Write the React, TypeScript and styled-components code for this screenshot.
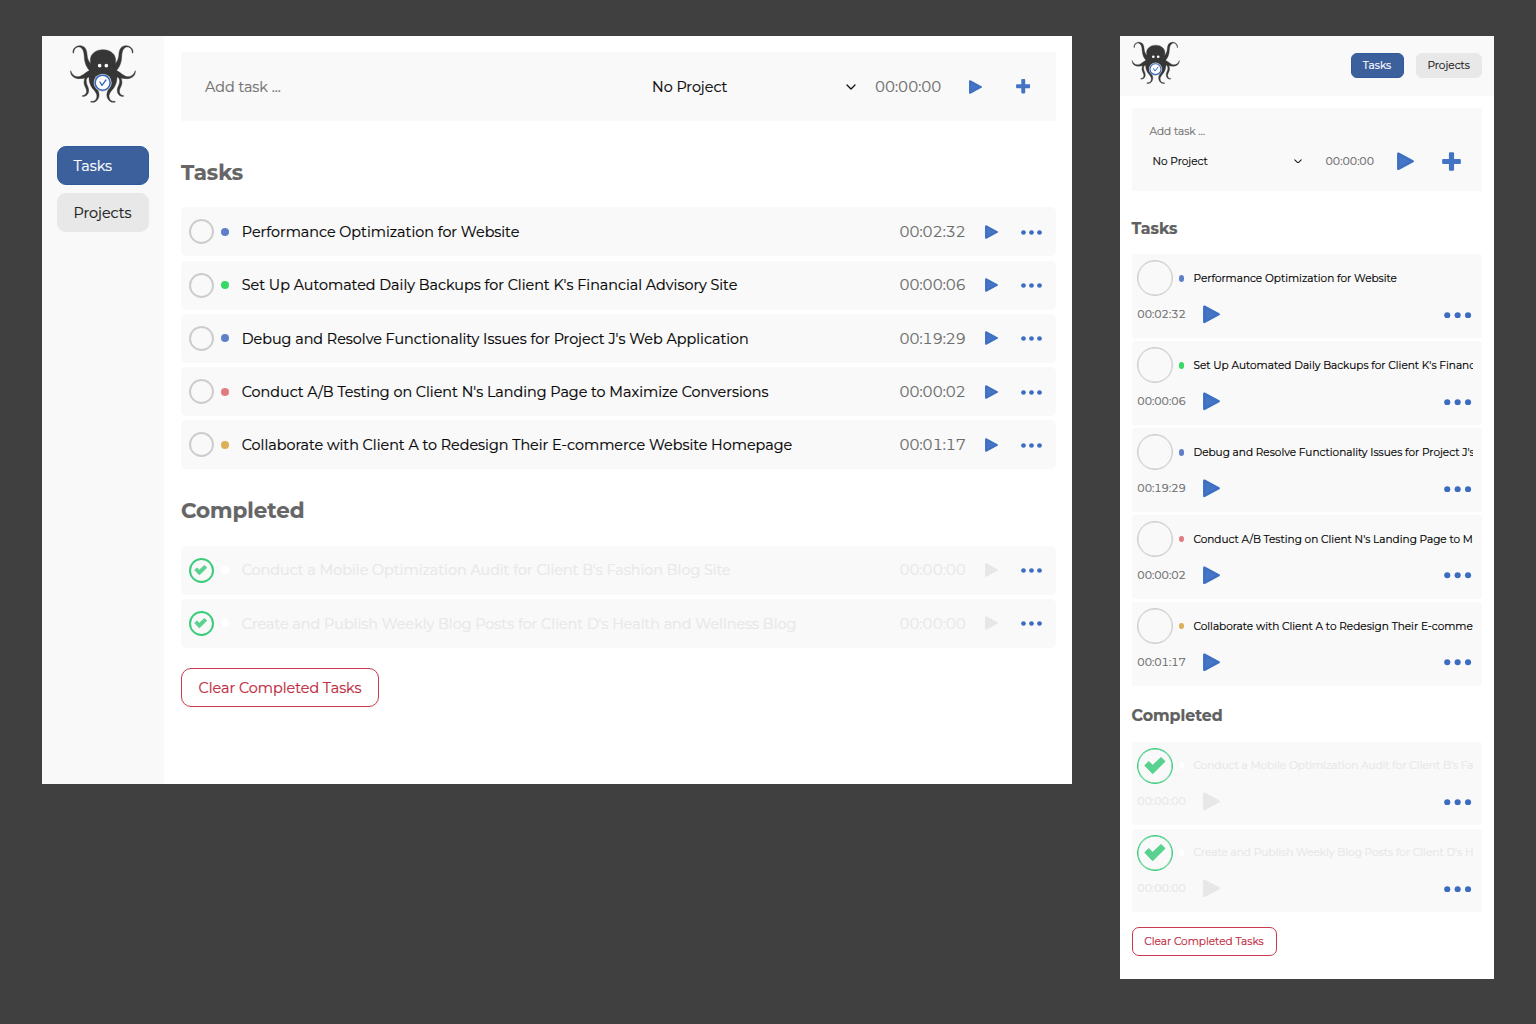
import React from "react";
import styled, { createGlobalStyle, css } from "styled-components";

const GlobalStyle = createGlobalStyle`
  *, *::before, *::after { box-sizing: border-box; }
  body {
    margin: 0;
    background: #404040;
    font-family: Montserrat, Inter, "Open Sans", sans-serif;
    color: #0b0b0b;
    -webkit-text-stroke: 0.2px currentColor;
  }
  button { font: inherit; background: none; border: 0; padding: 0; }
`;

/* ---------- data ---------- */

interface Task {
  title: string;
  time: string;
  color: string;
}

const openTasks: Task[] = [
  { title: "Performance Optimization for Website", time: "00:02:32", color: "#5f7fc9" },
  { title: "Set Up Automated Daily Backups for Client K's Financial Advisory Site", time: "00:00:06", color: "#35d865" },
  { title: "Debug and Resolve Functionality Issues for Project J's Web Application", time: "00:19:29", color: "#5f7fc9" },
  { title: "Conduct A/B Testing on Client N's Landing Page to Maximize Conversions", time: "00:00:02", color: "#e27c7c" },
  { title: "Collaborate with Client A to Redesign Their E-commerce Website Homepage", time: "00:01:17", color: "#dcb055" },
];

const doneTasks: Task[] = [
  { title: "Conduct a Mobile Optimization Audit for Client B's Fashion Blog Site", time: "00:00:00", color: "#ffffff" },
  { title: "Create and Publish Weekly Blog Posts for Client D's Health and Wellness Blog", time: "00:00:00", color: "#ffffff" },
];

/* ---------- shared parts ---------- */

const Stage = styled.div`
  display: flex;
  align-items: flex-start;
  gap: 48px;
  min-height: 1024px;
  padding: 36px 42px;
`;

const Label = styled.span`
  white-space: nowrap;
`;

const Time = styled.span<{ $muted?: boolean }>`
  color: ${(p) => (p.$muted ? "#e8e8e8" : "#6c6c6c")};
  font-variant-numeric: tabular-nums;
  white-space: nowrap;
`;

const IconButton = styled.button`
  display: flex;
  align-items: center;
  justify-content: center;
  flex: none;
  svg { display: block; }
`;

const Spacer = styled.div`
  flex: 1;
`;

const TitleText = styled.span<{ $muted?: boolean }>`
  color: ${(p) => (p.$muted ? "#e8e8e8" : "#060606")};
  white-space: nowrap;
  overflow: hidden;
  flex: 1;
  min-width: 0;
`;

const NavButton = styled.button<{ $active?: boolean }>`
  display: flex;
  align-items: center;
  border: 1px solid ${(p) => (p.$active ? "#2f5a9c" : "#e8e8e8")};
  background: ${(p) => (p.$active ? "#3c609b" : "#e8e8e8")};
  color: ${(p) => (p.$active ? "#ffffff" : "#222222")};
`;

const ClearButton = styled.button<{ $compact?: boolean }>`
  display: flex;
  align-items: center;
  justify-content: center;
  border: 1.4px solid #c9394f;
  background: #ffffff;
  color: #bf2c42;
  ${(p) =>
    p.$compact
      ? css`
          width: 145px;
          height: 29px;
          margin-top: 15px;
          border-width: 1px;
          border-radius: 7px;
        `
      : css`
          width: 198px;
          height: 39px;
          margin-top: 20.5px;
          border-radius: 10px;
        `}
`;

const Check = styled.button<{ $done?: boolean; $compact?: boolean }>`
  display: flex;
  align-items: center;
  justify-content: center;
  flex: none;
  width: ${(p) => (p.$compact ? 36 : 25)}px;
  height: ${(p) => (p.$compact ? 36 : 25)}px;
  border-radius: 50%;
  border: ${(p) => (p.$compact ? 1 : 2)}px solid ${(p) => (p.$done ? "#3bcc7c" : "#cdcdcd")};
  box-shadow: ${(p) => (p.$compact ? `inset 0 0 0 0.4px ${p.$done ? "#3bcc7c" : "#cdcdcd"}` : "none")};
`;

const ProjectDot = styled.i<{ $color: string; $compact?: boolean }>`
  flex: none;
  width: ${(p) => (p.$compact ? 5 : 8)}px;
  height: ${(p) => (p.$compact ? 6.5 : 8)}px;
  border-radius: 50%;
  background: ${(p) => p.$color};
`;

/* ---------- icons ---------- */

const PlayIcon = ({ width, height, muted }: { width: number; height: number; muted?: boolean }) => {
  const c = muted ? "#e7e7e7" : "#4575c4";
  return (
    <svg width={width} height={height} viewBox="0 0 13 14">
      <path
        d="M1 1.2 12 7 1 12.8Z"
        fill={c}
        stroke={muted ? c : "#3d6fc2"}
        strokeWidth="1.9"
        strokeLinejoin="round"
      />
    </svg>
  );
};

const PlusIcon = ({ size }: { size: number }) => (
  <svg width={size} height={size} viewBox="0 0 14 14">
    <path
      d="M5.9.1h2.2a.8.8 0 0 1 .8.8v4.2h4.2a.8.8 0 0 1 .8.8v2.2a.8.8 0 0 1-.8.8H8.9v4.2a.8.8 0 0 1-.8.8H5.9a.8.8 0 0 1-.8-.8V8.9H.9a.8.8 0 0 1-.8-.8V5.9a.8.8 0 0 1 .8-.8h4.2V.9a.8.8 0 0 1 .8-.8Z"
      fill="#4373c4"
    />
  </svg>
);

const DotsIcon = ({ width, height }: { width: number; height: number }) => (
  <svg width={width} height={height} viewBox="0 0 21 5">
    <circle cx="2.5" cy="2.5" r="2.35" fill="#3b6cbf" />
    <circle cx="10.5" cy="2.5" r="2.35" fill="#3b6cbf" />
    <circle cx="18.5" cy="2.5" r="2.35" fill="#3b6cbf" />
  </svg>
);

const TickIcon = ({ width, height }: { width: number; height: number }) => (
  <svg width={width} height={height} viewBox="0 0 22 18">
    <path d="M.5 8.7 4.6 4.7 8.6 8.6 17.2.5 21.4 4.5 8.6 17.2Z" fill="#5ad28f" stroke="#3fcc7e" strokeWidth=".8" strokeLinejoin="round" />
  </svg>
);

const ChevronIcon = ({ width }: { width: number }) => (
  <svg width={width} height={width * 0.6} viewBox="0 0 10 6">
    <path d="M1 1 5 5 9 1" fill="none" stroke="#111" strokeWidth="1.3" strokeLinecap="round" strokeLinejoin="round" />
  </svg>
);

const OctopusArms = () => (
  <>
    <path d="M111 66C109 52 121 43 134 44C148 46 152 57 153 69C154 84 158 94 170 102L166 124C152 111 146 97 145 78C144 62 141 51 131 48C122 46 113 53 113 66Z" />
    <path d="M104 119C107 129 114 137 126 137C138 137 145 126 162 118L176 134C157 136 144 144 127 143C111 141 103 132 104 119Z" />
    <path d="M172 124C158 134 150 142 151 152C152 164 159 169 158 180C157 192 147 198 139 196L139 194C147 194 152 188 152 180C151 170 144 165 144 154C144 141 151 131 162 121Z" />
    <path d="M172 138C172 152 175 163 182 171C189 181 192 194 186 204C181 213 172 216 164 213L165 211C173 213 180 208 182 201C185 191 180 184 173 176C164 166 157 151 160 134Z" />
  </>
);

const OctopusLogo = ({ width, height }: { width: number; height: number }) => (
  <svg width={width} height={height} viewBox="100 40 202 180">
    <g transform="translate(1 1)">
      <g fill="#363636" stroke="#363636" strokeWidth="1.4">
        <path d="M201 56C179 56 163 69 163 88C163 95 166 101 168 106C168 113 162 118 156 124L160 142L176 158H226L242 142L246 124C240 118 234 113 234 106C236 101 239 95 239 88C239 69 223 56 201 56Z" />
        <OctopusArms />
        <g transform="matrix(-1 0 0 1 402 0)">
          <OctopusArms />
        </g>
      </g>
      <circle cx="191" cy="104" r="5.5" fill="#fff" />
      <circle cx="211" cy="104" r="5.5" fill="#fff" />
    </g>
    <circle cx="201" cy="156" r="27" fill="#d2cdc8" />
    <circle cx="201" cy="156" r="22.5" fill="#fdfdfd" stroke="#3568be" strokeWidth="4.5" />
    <path d="M193 154 199 164 211 148" fill="none" stroke="#3568be" strokeWidth="4" strokeLinecap="round" strokeLinejoin="round" />
  </svg>
);

/* ---------- desktop window ---------- */

const DesktopWindow = styled.div`
  display: flex;
  flex: none;
  width: 1030px;
  height: 748px;
  background: #ffffff;
  font-size: 14.33px;
`;

const Sidebar = styled.aside`
  display: flex;
  flex-direction: column;
  flex: none;
  width: 122px;
  padding: 7.5px 15px 0 15px;
  background: #f9f9f9;
`;

const SideLogo = styled.div`
  display: flex;
  justify-content: center;
  height: 102.5px;
`;

const SideNav = styled.nav`
  display: flex;
  flex-direction: column;
  gap: 8.3px;
  ${NavButton} {
    height: 39px;
    padding: 0 15.5px;
    border-radius: 9px;
  }
`;

const DesktopMain = styled.main`
  flex: 1;
  min-width: 0;
  padding: 16px 16px 0 17px;
`;

const AddForm = styled.form`
  display: flex;
  align-items: center;
  height: 69px;
  padding-left: 24px;
  background: #f9f9f9;
`;

const Placeholder = styled(Label)`
  flex: none;
  width: 447px;
  color: #757575;
`;

const ProjectSelect = styled.div`
  display: flex;
  flex: none;
  align-items: center;
  justify-content: space-between;
  width: 204px;
  margin-right: 19px;
`;

const FormAction = styled(IconButton)`
  width: 48px;
`;

const TimeSlot = styled.div`
  width: 76px;
`;

const Heading = styled.h2<{ $first?: boolean }>`
  height: 26px;
  margin: ${(p) => (p.$first ? 38 : 28)}px 0 22.3px;
  font-size: 21.4px;
  line-height: 26px;
  font-weight: 700;
  color: #666666;
`;

const TaskList = styled.ul`
  display: flex;
  flex-direction: column;
  gap: 4.25px;
  margin: 0;
  padding: 0;
  list-style: none;
`;

const TaskRow = styled.li`
  display: flex;
  align-items: center;
  height: 49px;
  padding: 0 14.5px 0 7.6px;
  border-radius: 5px;
  background: #f9f9f9;
  ${ProjectDot} { margin: 0 12.4px 0 7.8px; }
  ${TitleText} { padding-top: 0.6px; }
  ${Time} { width: 85px; padding-top: 0.6px; }
`;

const MoreSlot = styled.div`
  padding: 1px 0 0 23px;
`;

const DesktopTask = ({ task, done }: { task: Task; done?: boolean }) => (
  <TaskRow>
    <Check $done={done}>{done && <TickIcon width={13.5} height={10.5} />}</Check>
    <ProjectDot $color={task.color} />
    <TitleText $muted={done}>{task.title}</TitleText>
    <Time $muted={done}>{task.time}</Time>
    <IconButton><PlayIcon width={13} height={14} muted={done} /></IconButton>
    <MoreSlot><IconButton><DotsIcon width={21} height={5} /></IconButton></MoreSlot>
  </TaskRow>
);

const Desktop = () => (
  <DesktopWindow>
    <Sidebar>
      <SideLogo><OctopusLogo width={67.3} height={60} /></SideLogo>
      <SideNav>
        <NavButton $active><Label>Tasks</Label></NavButton>
        <NavButton><Label>Projects</Label></NavButton>
      </SideNav>
    </Sidebar>
    <DesktopMain>
      <AddForm>
        <Placeholder>Add task ...</Placeholder>
        <ProjectSelect><Label>No Project</Label><ChevronIcon width={10} /></ProjectSelect>
        <TimeSlot><Time>00:00:00</Time></TimeSlot>
        <FormAction as="span"><PlayIcon width={13} height={14} /></FormAction>
        <FormAction as="span"><PlusIcon size={14.5} /></FormAction>
      </AddForm>
      <Heading $first><Label>Tasks</Label></Heading>
      <TaskList>{openTasks.map((t) => <DesktopTask key={t.title} task={t} />)}</TaskList>
      <Heading><Label>Completed</Label></Heading>
      <TaskList>{doneTasks.map((t) => <DesktopTask key={t.title} task={t} done />)}</TaskList>
      <ClearButton><Label>Clear Completed Tasks</Label></ClearButton>
    </DesktopMain>
  </DesktopWindow>
);

/* ---------- mobile window ---------- */

const MobileWindow = styled.div`
  flex: none;
  width: 374px;
  height: 943px;
  background: #ffffff;
  font-size: 10.5px;
`;

const TopBar = styled.header`
  display: flex;
  justify-content: space-between;
  height: 59.5px;
  padding: 5px 12px 0 11px;
  background: #f9f9f9;
`;

const TopNav = styled.nav`
  display: flex;
  gap: 12px;
  padding-top: 12px;
  ${NavButton} {
    justify-content: center;
    width: 66.5px;
    height: 25px;
    border-radius: 6px;
  }
  ${NavButton}:first-child { width: 53px; }
`;

const MobileMain = styled.main`
  padding: 12px 12px 0 11.5px;
`;

const MobileForm = styled.form`
  display: flex;
  flex-direction: column;
  height: 83.5px;
  padding: 15px 19px 0 18px;
  background: #f9f9f9;
`;

const MobilePlaceholder = styled(Label)`
  height: 18px;
  line-height: 18px;
  color: #757575;
`;

const FormLine = styled.div`
  display: flex;
  align-items: center;
  height: 41px;
  padding-left: 3px;
  ${Time} { width: 71.5px; }
`;

const MobileSelect = styled.div`
  display: flex;
  flex: none;
  align-items: center;
  justify-content: space-between;
  width: 149.5px;
  margin-right: 23.5px;
`;

const MobileAdd = styled(IconButton)`
  margin-left: 28px;
`;

const MobileHeading = styled.h2<{ $first?: boolean }>`
  height: 20px;
  margin: ${(p) => (p.$first ? 28.2 : 20.7)}px 0 ${(p) => (p.$first ? 15.3 : 15.5)}px;
  font-size: 15.8px;
  line-height: 20px;
  font-weight: 700;
  color: #606060;
`;

const MobileList = styled(TaskList)`
  gap: 3.4px;
`;

const MobileRow = styled.li`
  height: 83.5px;
  padding: 6px 9px 0 5.8px;
  border-radius: 3px;
  background: #f9f9f9;
`;

const RowLine = styled.div`
  display: flex;
  align-items: center;
  height: 36px;
  ${ProjectDot} { margin: 0 9.2px 0 6px; }
  ${Time} { width: 65.7px; }
`;

const MobileMore = styled.div`
  padding: 1px 1.3px 0 0;
`;

const MobileTask = ({ task, done }: { task: Task; done?: boolean }) => (
  <MobileRow>
    <RowLine>
      <Check $compact $done={done}>{done && <TickIcon width={22} height={17.5} />}</Check>
      <ProjectDot $compact $color={task.color} />
      <TitleText $muted={done}>{task.title}</TitleText>
    </RowLine>
    <RowLine>
      <Time $muted={done}>{task.time}</Time>
      <IconButton><PlayIcon width={17} height={18.5} muted={done} /></IconButton>
      <Spacer />
      <MobileMore><IconButton><DotsIcon width={27.3} height={6.5} /></IconButton></MobileMore>
    </RowLine>
  </MobileRow>
);

const Mobile = () => (
  <MobileWindow>
    <TopBar>
      <OctopusLogo width={49} height={43.7} />
      <TopNav>
        <NavButton $active><Label>Tasks</Label></NavButton>
        <NavButton><Label>Projects</Label></NavButton>
      </TopNav>
    </TopBar>
    <MobileMain>
      <MobileForm>
        <MobilePlaceholder>Add task ...</MobilePlaceholder>
        <FormLine>
          <MobileSelect><Label>No Project</Label><ChevronIcon width={8} /></MobileSelect>
          <Time>00:00:00</Time>
          <IconButton as="span"><PlayIcon width={17} height={18.5} /></IconButton>
          <MobileAdd as="span"><PlusIcon size={19} /></MobileAdd>
        </FormLine>
      </MobileForm>
      <MobileHeading $first><Label>Tasks</Label></MobileHeading>
      <MobileList>{openTasks.map((t) => <MobileTask key={t.title} task={t} />)}</MobileList>
      <MobileHeading><Label>Completed</Label></MobileHeading>
      <MobileList>{doneTasks.map((t) => <MobileTask key={t.title} task={t} done />)}</MobileList>
      <ClearButton $compact><Label>Clear Completed Tasks</Label></ClearButton>
    </MobileMain>
  </MobileWindow>
);

export default function App() {
  return (
    <>
      <GlobalStyle />
      <Stage>
        <Desktop />
        <Mobile />
      </Stage>
    </>
  );
}
